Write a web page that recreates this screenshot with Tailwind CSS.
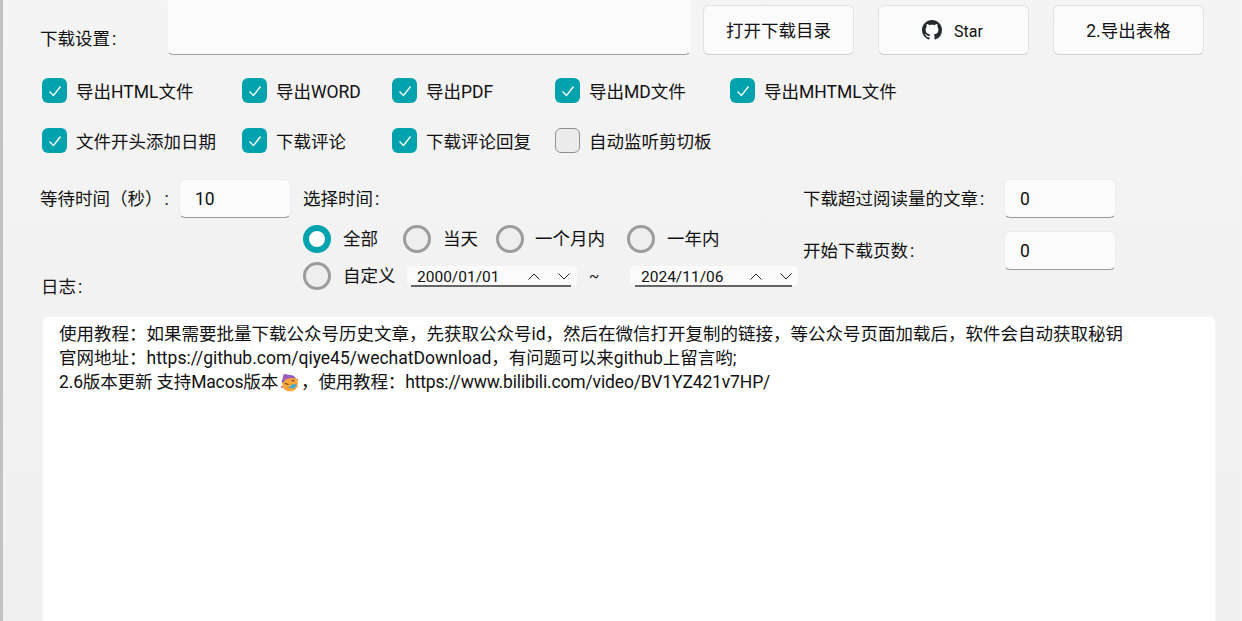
<!DOCTYPE html>
<html>
<head>
<meta charset="utf-8">
<title>wechatDownload</title>
<script src="https://cdn.jsdelivr.net/npm/@tailwindcss/browser@4"></script>
</head>
<body class="m-0">
<main class="h-[621px] w-[1242px] overflow-hidden flex flex-col bg-linear-to-b from-[#f4f4f4] to-[#f0f0f0] border-l-[3px] border-r border-l-[#c2c2c2] border-r-[#f8f8f8] pl-[38px] text-[17.5px] text-[#111111] font-['Roboto','Noto_Sans_CJK_SC',sans-serif]">

  <!-- top row -->
  <div class="flex h-[55px] shrink-0">
    <div class="w-[126px] pt-[26px] leading-[26px] -ml-px">下载设置<span class="ml-[2px]">:</span></div>
    <div class="ml-px w-[524px] h-[55px] bg-[#fbfbfb] rounded-b-md border-b border-[#a0a0a0] border-x border-x-[#f6f6f6]"></div>
    <div class="flex ml-[12px] mt-[5px] gap-[24px]">
      <button class="w-[151px] h-[50px] pt-[2px] bg-[#fbfbfb] border border-[#e2e2e2] border-b-[#cfcfcf] rounded-md">打开下载目录</button>
      <button class="w-[151px] h-[50px] bg-[#fbfbfb] border border-[#e2e2e2] border-b-[#cfcfcf] rounded-md flex items-center justify-center gap-[12px] text-[16px]">
        <svg class="w-[20px] h-[20px] -ml-[2px] text-[#24292f]" viewBox="0 0 16 16" fill="currentColor"><path d="M8 0C3.58 0 0 3.58 0 8c0 3.54 2.29 6.53 5.47 7.59.4.07.55-.17.55-.38 0-.19-.01-.82-.01-1.49-2.01.37-2.53-.49-2.69-.94-.09-.23-.48-.94-.82-1.13-.28-.15-.68-.52-.01-.53.63-.01 1.08.58 1.23.82.72 1.21 1.87.87 2.33.66.07-.52.28-.87.51-1.07-1.78-.2-3.64-.89-3.64-3.95 0-.87.31-1.59.82-2.15-.08-.2-.36-1.02.08-2.12 0 0 .67-.21 2.2.82.64-.18 1.32-.27 2-.27s1.36.09 2 .27c1.53-1.04 2.2-.82 2.2-.82.44 1.1.16 1.92.08 2.12.51.56.82 1.27.82 2.15 0 3.07-1.87 3.75-3.65 3.95.29.25.54.73.54 1.48 0 1.07-.01 1.93-.01 2.2 0 .21.15.46.55.38A8.01 8.01 0 0 0 16 8c0-4.42-3.58-8-8-8z"/></svg>
        <span class="pt-[3px]">Star</span>
      </button>
      <button class="w-[151px] h-[50px] pt-[2px] bg-[#fbfbfb] border border-[#e2e2e2] border-b-[#cfcfcf] rounded-md">2.导出表格</button>
    </div>
  </div>

  <!-- checkboxes -->
  <div class="ml-[1px] mt-[23px] grid grid-cols-[200px_150px_163px_175px_auto] auto-rows-[25px] gap-y-[25px] shrink-0">
    <label class="flex items-center gap-[9px]"><span class="w-[25px] h-[25px] rounded-[6px] bg-[#00a3ad] flex items-center justify-center"><svg class="w-[14px] h-[14px]" viewBox="0 0 14 14" fill="none" stroke="#ffffff" stroke-width="1.3"><path d="M1.5 7.500 5.500 11.500 12.500 2.500"/></svg></span><span class="pt-[4px]">导出HTML文件</span></label>
    <label class="flex items-center gap-[9px]"><span class="w-[25px] h-[25px] rounded-[6px] bg-[#00a3ad] flex items-center justify-center"><svg class="w-[14px] h-[14px]" viewBox="0 0 14 14" fill="none" stroke="#ffffff" stroke-width="1.3"><path d="M1.5 7.500 5.500 11.500 12.500 2.500"/></svg></span><span class="pt-[4px]">导出WORD</span></label>
    <label class="flex items-center gap-[9px]"><span class="w-[25px] h-[25px] rounded-[6px] bg-[#00a3ad] flex items-center justify-center"><svg class="w-[14px] h-[14px]" viewBox="0 0 14 14" fill="none" stroke="#ffffff" stroke-width="1.3"><path d="M1.5 7.500 5.500 11.500 12.500 2.500"/></svg></span><span class="pt-[4px]">导出PDF</span></label>
    <label class="flex items-center gap-[9px]"><span class="w-[25px] h-[25px] rounded-[6px] bg-[#00a3ad] flex items-center justify-center"><svg class="w-[14px] h-[14px]" viewBox="0 0 14 14" fill="none" stroke="#ffffff" stroke-width="1.3"><path d="M1.5 7.500 5.500 11.500 12.500 2.500"/></svg></span><span class="pt-[4px]">导出MD文件</span></label>
    <label class="flex items-center gap-[9px]"><span class="w-[25px] h-[25px] rounded-[6px] bg-[#00a3ad] flex items-center justify-center"><svg class="w-[14px] h-[14px]" viewBox="0 0 14 14" fill="none" stroke="#ffffff" stroke-width="1.3"><path d="M1.5 7.500 5.500 11.500 12.500 2.500"/></svg></span><span class="pt-[4px]">导出MHTML文件</span></label>
    <label class="flex items-center gap-[9px]"><span class="w-[25px] h-[25px] rounded-[6px] bg-[#00a3ad] flex items-center justify-center"><svg class="w-[14px] h-[14px]" viewBox="0 0 14 14" fill="none" stroke="#ffffff" stroke-width="1.3"><path d="M1.5 7.500 5.500 11.500 12.500 2.500"/></svg></span><span class="pt-[4px]">文件开头添加日期</span></label>
    <label class="flex items-center gap-[9px]"><span class="w-[25px] h-[25px] rounded-[6px] bg-[#00a3ad] flex items-center justify-center"><svg class="w-[14px] h-[14px]" viewBox="0 0 14 14" fill="none" stroke="#ffffff" stroke-width="1.3"><path d="M1.5 7.500 5.500 11.500 12.500 2.500"/></svg></span><span class="pt-[4px]">下载评论</span></label>
    <label class="flex items-center gap-[9px]"><span class="w-[25px] h-[25px] rounded-[6px] bg-[#00a3ad] flex items-center justify-center"><svg class="w-[14px] h-[14px]" viewBox="0 0 14 14" fill="none" stroke="#ffffff" stroke-width="1.3"><path d="M1.5 7.500 5.500 11.500 12.500 2.500"/></svg></span><span class="pt-[4px]">下载评论回复</span></label>
    <label class="flex items-center gap-[9px]"><span class="w-[25px] h-[25px] rounded-[6px] bg-[#ececec] border border-[#8f8f8f]"></span><span class="pt-[4px]">自动监听剪切板</span></label>
  </div>

  <!-- wait time, time range, limits -->
  <div class="mt-[26px] h-[137px] flex shrink-0">
    <div class="w-[262px] flex flex-col">
      <div class="flex items-center h-[39px]">
        <span class="w-[138px] -ml-px mr-px pt-[2px]">等待时间（秒）<span class="ml-[2px]">:</span></span>
        <div class="w-[112px] h-[39px] pt-[2px] bg-[#fbfbfb] border border-[#ececec] border-b-[#9a9a9a] rounded-md pl-[15px] flex items-center">10</div>
      </div>
      <div class="mt-[56px] leading-[26px]">日志<span class="ml-[2px]">:</span></div>
    </div>

    <div class="w-[500px] flex flex-col">
      <div class="h-[39px] pt-[2px] flex items-center">选择时间<span class="ml-[2px]">:</span></div>
      <div class="mt-[7px] h-[28px] flex items-center">
        <span class="w-[28px] h-[28px] rounded-full border-[6px] border-[#00a3ad] bg-white"></span>
        <span class="ml-[12px] w-[60px]">全部</span>
        <span class="w-[28px] h-[28px] rounded-full border-[3px] border-[#9c9c9c] bg-[#eeeeee]"></span>
        <span class="ml-[12px] w-[53px]">当天</span>
        <span class="w-[28px] h-[28px] rounded-full border-[3px] border-[#9c9c9c] bg-[#eeeeee]"></span>
        <span class="ml-[11px] w-[92px]">一个月内</span>
        <span class="w-[28px] h-[28px] rounded-full border-[3px] border-[#9c9c9c] bg-[#eeeeee]"></span>
        <span class="ml-[12px]">一年内</span>
      </div>
      <div class="mt-[9px] h-[28px] flex items-center">
        <span class="w-[28px] h-[28px] rounded-full border-[3px] border-[#9c9c9c] bg-[#eeeeee]"></span>
        <span class="ml-[12px] w-[64px]">自定义</span>
        <div class="w-[170px] h-[20px] bg-[#fbfbfb] rounded-[5px] pl-[4px] pr-[6px]">
          <div class="h-[21px] pt-[2px] border-b-2 border-[#666666] flex items-center pl-[6px] pr-[1px] text-[15.5px]">
            <span class="flex-1 leading-[18px]">2000/01/01</span>
            <svg class="w-[12px] h-[7px]" viewBox="0 0 12 7" fill="none" stroke="#222222"><path d="M.5 6.500 6 1l5.500 5.500"/></svg>
            <svg class="ml-[18px] w-[12px] h-[7px]" viewBox="0 0 12 7" fill="none" stroke="#222222"><path d="M.5.5 6 6 11.500.5"/></svg>
          </div>
        </div>
        <span class="ml-[12px] w-[41px] text-[15px]">~</span>
        <div class="w-[168px] h-[20px] bg-[#fbfbfb] rounded-[5px] pl-[5px] pr-[6px]">
          <div class="h-[21px] pt-[2px] border-b-2 border-[#666666] flex items-center pl-[6px] text-[15.5px]">
            <span class="flex-1 leading-[18px]">2024/11/06</span>
            <svg class="w-[12px] h-[7px]" viewBox="0 0 12 7" fill="none" stroke="#222222"><path d="M.5 6.500 6 1l5.500 5.500"/></svg>
            <svg class="ml-[18px] w-[12px] h-[7px]" viewBox="0 0 12 7" fill="none" stroke="#222222"><path d="M.5.5 6 6 11.500.5"/></svg>
          </div>
        </div>
      </div>
    </div>

    <div class="flex flex-col gap-[13px]">
      <div class="flex items-center h-[39px]">
        <span class="w-[201px] pt-[2px]">下载超过阅读量的文章<span class="ml-[2px]">:</span></span>
        <div class="w-[112px] h-[39px] pt-[2px] bg-[#fbfbfb] border border-[#ececec] border-b-[#9a9a9a] rounded-md pl-[15px] flex items-center">0</div>
      </div>
      <div class="flex items-center h-[39px]">
        <span class="w-[201px] pt-[2px]">开始下载页数<span class="ml-[2px]">:</span></span>
        <div class="w-[112px] h-[39px] pt-[2px] bg-[#fbfbfb] border border-[#ececec] border-b-[#9a9a9a] rounded-md pl-[15px] flex items-center">0</div>
      </div>
    </div>
  </div>

  <!-- log -->
  <div class="ml-[1px] w-[1174px] flex-1 bg-white border border-b-0 border-[#f6f6f6] rounded-t-md pl-[16px] pt-[5px] leading-[24px]">
    <div>使用教程：如果需要批量下载公众号历史文章，先获取公众号id，然后在微信打开复制的链接，等公众号页面加载后，软件会自动获取秘钥</div>
    <div>官网地址：https://github.com/qiye45/wechatDownload，有问题可以来github上留言哟;</div>
    <div class="flex items-center tracking-[-0.15px]">2.6版本更新 支持Macos版本
      <svg class="mx-[2px] w-[19px] h-[19px]" viewBox="0 0 19 19"><circle cx="10" cy="10.500" r="8" fill="#f9a63a"/><path d="M1.500 9 4 1 13 2.500l3 3-6-.5-5 1.500-1 3z" fill="#8b5cc4"/><path d="M3 2.500 6 7M7 1.500 9.500 5.500" stroke="#e0569b" fill="none"/><path d="M5 10.500 8.500 11.500M11.500 7.500 14.500 8" stroke="#4a3320" fill="none"/><path d="M8 15 13 11l4 .5-3 4z" fill="#3fa9d8"/><circle cx="2" cy="14" r="1" fill="#e0569b"/><circle cx="17.500" cy="6.500" r=".8" fill="#f05a5a"/></svg>，使用教程：https://www.bilibili.com/video/BV1YZ421v7HP/</div>
  </div>
</main>
</body>
</html>
